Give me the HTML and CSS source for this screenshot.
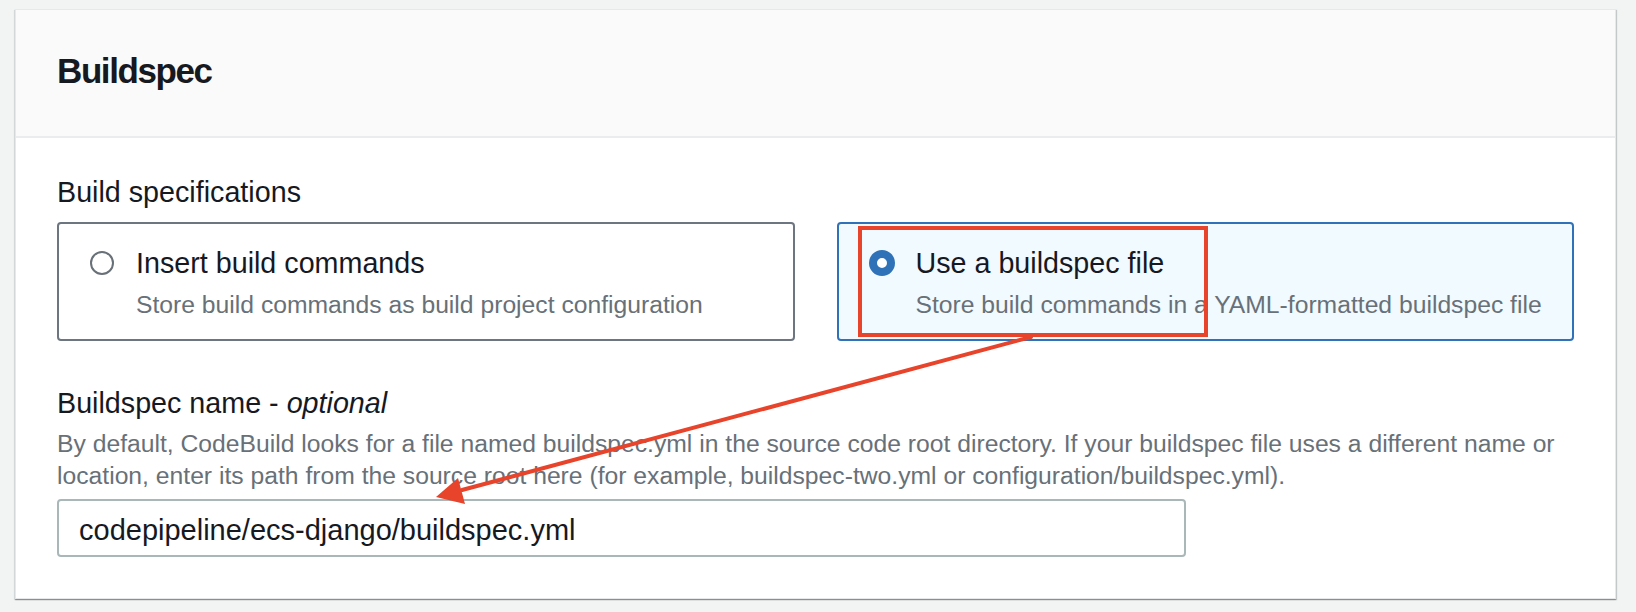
FILE: index.html
```html
<!DOCTYPE html>
<html lang="en">
<head>
<meta charset="utf-8">
<title>Buildspec</title>
<link rel="stylesheet" href="styles.css">
</head>
<body>
<section class="card">
  <header class="card-header">
    <h2 class="card-title">Buildspec</h2>
  </header>
  <div class="card-body">
    <div class="field">
      <div class="field-label">Build specifications</div>
      <div class="tiles">
        <div class="tile">
          <span class="radio"></span>
          <div class="tile-text">
            <div class="tile-title">Insert build commands</div>
            <div class="tile-desc">Store build commands as build project configuration</div>
          </div>
        </div>
        <div class="tile tile-selected">
          <span class="radio radio-checked"></span>
          <div class="tile-text">
            <div class="tile-title">Use a buildspec file</div>
            <div class="tile-desc">Store build commands in a YAML-formatted buildspec file</div>
          </div>
        </div>
      </div>
    </div>
    <div class="field field-name">
      <div class="field-label">Buildspec name - <em>optional</em></div>
      <div class="field-help">By default, CodeBuild looks for a file named buildspec.yml in the source code root directory. If your buildspec file uses a different name or location, enter its path from the source root here (for example, buildspec-two.yml or configuration/buildspec.yml).</div>
      <input class="text-input" type="text" value="codepipeline/ecs-django/buildspec.yml">
    </div>
  </div>
</section>
<svg class="annotation" width="1636" height="612" viewBox="0 0 1636 612" xmlns="http://www.w3.org/2000/svg">
  <rect x="860" y="228" width="346" height="107" fill="none" stroke="#e8432b" stroke-width="4"/>
  <line x1="1031" y1="337" x2="462" y2="490" stroke="#e8432b" stroke-width="4" stroke-linecap="round"/>
  <polygon points="436,497 458,478 465,504" fill="#e8432b"/>
</svg>
</body>
</html>
```

FILE: styles.css
```css
html, body {
  margin: 0;
  padding: 0;
}

body {
  background: #f2f3f3;
  font-family: "Liberation Sans", Arial, sans-serif;
  color: #16191f;
  width: 1636px;
  height: 612px;
  overflow: hidden;
}

.card {
  margin: 9px 20px 0 15px;
  background: #ffffff;
  border: 1px solid #e6e8ea;
  box-shadow: 0 1px 1px 0 rgba(0, 28, 36, 0.3), 1px 1px 1px 0 rgba(0, 28, 36, 0.15), -1px 1px 1px 0 rgba(0, 28, 36, 0.08);
}

.card-header {
  background: #fafafa;
  padding: 41px 41px 45px;
  border-bottom: 2px solid #eaeded;
}

.card-title {
  margin: 0;
  font-size: 35px;
  line-height: 40px;
  font-weight: 700;
  letter-spacing: -1.4px;
  color: #16191f;
}

.card-body {
  padding: 34px 41px 41px;
}

.field-label {
  font-size: 28.7px;
  line-height: 40px;
  color: #16191f;
}

.field-label em {
  font-style: italic;
}

.tiles {
  display: grid;
  grid-template-columns: 1fr 1fr;
  column-gap: 42px;
  margin-top: 10px;
}

.tile {
  display: flex;
  align-items: flex-start;
  gap: 22px;
  border: 2px solid #6c7580;
  border-radius: 4px;
  padding: 19px 20px 18px 31px;
  background: #ffffff;
}

.tile-selected {
  border-color: #2f72b8;
  background: #f1faff;
}

.radio {
  flex: none;
  box-sizing: border-box;
  width: 24px;
  height: 24px;
  margin-top: 8px;
  border: 2px solid #687078;
  border-radius: 50%;
  background: #ffffff;
}

.radio-checked {
  width: 26px;
  height: 26px;
  margin-top: 7px;
  margin-left: -1px;
  margin-right: -1px;
  border: 8px solid #2f72b8;
}

.tile-title {
  font-size: 28.7px;
  line-height: 40px;
  color: #16191f;
}

.tile-desc {
  margin-top: 6px;
  font-size: 24.7px;
  line-height: 32px;
  color: #687078;
}

.field-name {
  margin-top: 42px;
}

.field-help {
  margin-top: 5px;
  font-size: 24.7px;
  line-height: 32px;
  color: #687078;
}

.text-input {
  display: block;
  box-sizing: border-box;
  margin: 7px 0 0;
  width: 1129px;
  height: 58px;
  padding: 4px 20px 0;
  border: 2px solid #aab7b8;
  border-radius: 4px;
  background: #ffffff;
  font-family: "Liberation Sans", Arial, sans-serif;
  font-size: 29px;
  color: #16191f;
  outline: none;
}

.annotation {
  position: absolute;
  top: 0;
  left: 0;
  pointer-events: none;
}
```
